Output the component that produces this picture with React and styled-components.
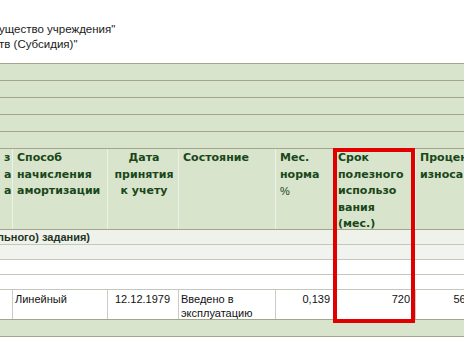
import React from "react";
import styled, { createGlobalStyle } from "styled-components";

const GlobalStyle = createGlobalStyle`
  html, body {
    margin: 0;
    padding: 0;
    background: #ffffff;
    overflow: hidden;
  }
`;

const GREEN = "#d8e4cb";
const OLIVE = "#a3a68b";
const HEAD_TEXT = "#1a471a";

const cols = "13px 95px 71px 97px 58px 82px 69px 80px";

function Report() {
  return (
    <Page>
      <Title>
        <TitleLine>ущество учреждения"</TitleLine>
        <TitleLine>тв (Субсидия)"</TitleLine>
      </Title>
      <Stripes>
        {[0, 1, 2, 3, 4].map((i) => (
          <Stripe key={i} />
        ))}
      </Stripes>
      <Grid>
        <HeadCell align="right">з<br />а<br />а</HeadCell>
        <HeadCell>Способ<br />начисления<br />амортизации</HeadCell>
        <HeadCell align="center">Дата<br />принятия<br />к учету</HeadCell>
        <HeadCell>Состояние</HeadCell>
        <HeadCell>Мес.<br />норма<br /><Light>%</Light></HeadCell>
        <HeadCell>Срок<br />полезного<br />использо<br />вания<br />(мес.)</HeadCell>
        <HeadCell>Процент<br />износа</HeadCell>
        <HeadCell />
      </Grid>
      <SectionRow>льного) задания)</SectionRow>
      <PlainRow tint />
      <PlainRow />
      <PlainRow />
      <DataGrid>
        <DataCell />
        <DataCell>Линейный</DataCell>
        <DataCell align="center">12.12.1979</DataCell>
        <DataCell>Введено в<br />эксплуатацию</DataCell>
        <DataCell align="right">0,139</DataCell>
        <DataCell align="right" pad={5}>720</DataCell>
        <DataCell align="right">56,64</DataCell>
        <DataCell />
      </DataGrid>
      <FooterBar />
      <Highlight />
    </Page>
  );
}

const Page = styled.div`
  position: relative;
  width: 560px;
  font-family: "Liberation Sans", Arial, sans-serif;
`;

const Title = styled.div`
  height: 63px;
  box-sizing: border-box;
  padding-top: 22px;
  font-size: 11.5px;
  line-height: 15px;
  color: #1a1a1a;
`;

const TitleLine = styled.div`
  white-space: nowrap;
  text-indent: -1px;
`;

const Stripes = styled.div`
  display: flex;
  flex-direction: column;
`;

const Stripe = styled.div`
  height: 16px;
  border-top: 1px solid ${OLIVE};
  background: ${GREEN};
`;

const Grid = styled.div`
  display: grid;
  grid-template-columns: ${cols};
  height: 82px;
  box-sizing: border-box;
  border-top: 1px solid ${OLIVE};
  border-bottom: 1px solid ${OLIVE};
  background: ${GREEN};
`;

const HeadCell = styled.div`
  box-sizing: border-box;
  border-right: 1px solid #edf2e6;
  padding: 1px 2px 0 4px;
  text-align: ${(p) => p.align || "left"};
  font-family: "DejaVu Sans", Verdana, sans-serif;
  font-weight: bold;
  font-size: 11px;
  line-height: 16.5px;
  color: ${HEAD_TEXT};
  white-space: nowrap;
  overflow: hidden;
`;

const Light = styled.span`
  font-family: "Liberation Sans", Arial, sans-serif;
  font-weight: normal;
`;

const SectionRow = styled.div`
  height: 14px;
  border-bottom: 1px solid #c3c7bc;
  background: #eef2ea;
  font-family: "Liberation Sans", Arial, sans-serif;
  font-weight: bold;
  font-size: 11px;
  line-height: 14px;
  color: #1f351f;
  text-indent: -3px;
  white-space: nowrap;
`;

const PlainRow = styled.div`
  height: 14px;
  border-bottom: 1px solid #c3c7bc;
  background: ${(p) => (p.tint ? "#f1f3ef" : "#ffffff")};
`;

const DataGrid = styled.div`
  display: grid;
  grid-template-columns: ${cols};
  height: 29px;
  background: #ffffff;
`;

const DataCell = styled.div`
  box-sizing: border-box;
  border-right: 1px solid #c8ccc4;
  padding: 2px ${(p) => p.pad || 3}px 0 2px;
  text-align: ${(p) => p.align || "left"};
  font-size: 11px;
  line-height: 14px;
  color: #111111;
  white-space: nowrap;
  overflow: hidden;
`;

const FooterBar = styled.div`
  height: 16px;
  border-top: 1px solid ${OLIVE};
  border-bottom: 1px solid ${OLIVE};
  background: ${GREEN};
`;

const Highlight = styled.div`
  position: absolute;
  left: 333px;
  top: 148px;
  width: 82px;
  height: 175px;
  box-sizing: border-box;
  border: 4px solid #e00000;
  pointer-events: none;
`;

export default function App() {
  return (
    <>
      <GlobalStyle />
      <Report />
    </>
  );
}
